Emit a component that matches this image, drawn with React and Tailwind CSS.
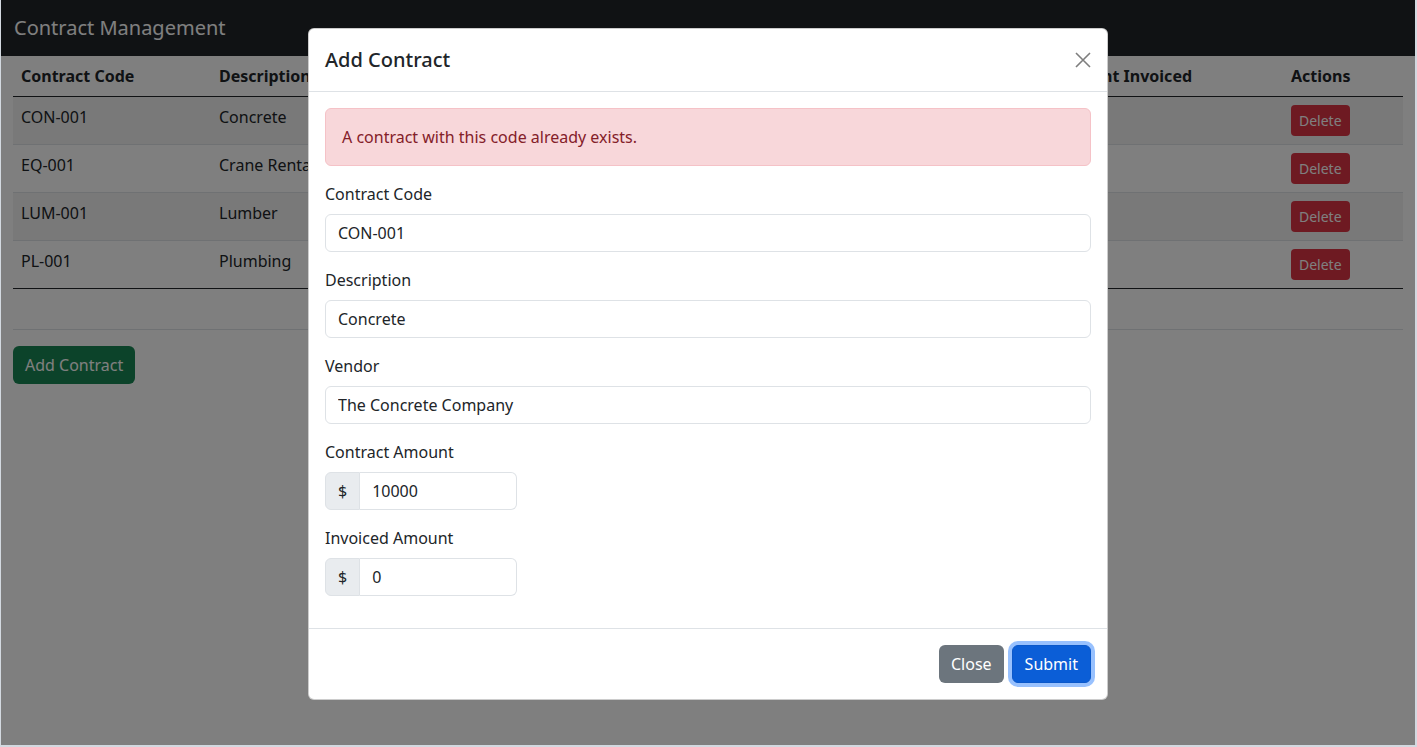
const contracts = [
  { code: "CON-001", description: "Concrete", vendor: "The Concrete Company", amount: "$10,000.00", invoiced: "$0.00" },
  { code: "EQ-001", description: "Crane Rental", vendor: "Heavy Lift Inc.", amount: "$5,000.00", invoiced: "$0.00" },
  { code: "LUM-001", description: "Lumber", vendor: "Timber Supply", amount: "$8,000.00", invoiced: "$0.00" },
  { code: "PL-001", description: "Plumbing", vendor: "Pipe Works", amount: "$4,000.00", invoiced: "$0.00" },
]

const Field = ({ label, value }) => {
  return (
    <div className="mb-4">
      <label className="block mb-2 leading-6">{label}</label>
      <input
        className="block w-full h-[38px] px-3 border border-[#dee2e6] rounded-md text-[#212529] bg-white outline-none"
        defaultValue={value}
      />
    </div>
  )
}

const MoneyField = ({ label, value }) => {
  return (
    <div className="mb-4">
      <label className="block mb-2 leading-6">{label}</label>
      <div className="flex w-1/4 h-[38px]">
        <span className="flex items-center px-3 bg-[#e9ecef] border border-[#dee2e6] rounded-l-md">$</span>
        <input
          className="min-w-0 flex-1 px-3 border border-l-0 border-[#dee2e6] rounded-r-md text-[#212529] bg-white outline-none"
          defaultValue={value}
        />
      </div>
    </div>
  )
}

const App = () => {
  return (
    <div className="w-[1417px] h-[747px] pl-px bg-[#d3d9e0] font-['Noto_Sans',sans-serif] text-[#212529] text-base">
      <div className="relative w-[1414px] h-[745px] overflow-hidden bg-white">
        <nav className="h-14 bg-[#212529] flex items-center px-[13px]">
          <span className="text-white text-xl">Contract Management</span>
        </nav>

        <div className="px-3">
          <table className="w-full mb-4 border-collapse text-left">
            <thead>
              <tr>
                <th className="w-[198px] px-2 py-2 font-bold leading-6">Contract Code</th>
                <th className="w-[283px] px-2 py-2 font-bold leading-6">Description</th>
                <th className="w-[283px] px-2 py-2 font-bold leading-6">Vendor</th>
                <th className="w-[270px] px-2 py-2 font-bold leading-6">Contract Amount</th>
                <th className="w-[236px] px-2 py-2 font-bold leading-6">Amount Invoiced</th>
                <th className="px-2 py-2 font-bold leading-6">Actions</th>
              </tr>
            </thead>
            <tbody className="border-t border-[#212529]">
              {contracts.map((c, i) => (
                <tr key={c.code} className={`border-b last:border-b-0 border-[#dee2e6] ${i % 2 === 0 ? "bg-[#f2f2f2]" : "bg-white"}`}>
                  <td className="px-2 py-2 align-top leading-6">{c.code}</td>
                  <td className="px-2 py-2 align-top leading-6">{c.description}</td>
                  <td className="px-2 py-2 align-top leading-6">{c.vendor}</td>
                  <td className="px-2 py-2 align-top leading-6">{c.amount}</td>
                  <td className="px-2 py-2 align-top leading-6">{c.invoiced}</td>
                  <td className="px-2 py-2 align-top leading-6">
                    <button className="h-[31px] px-2 text-sm text-white bg-[#dc3545] rounded">Delete</button>
                  </td>
                </tr>
              ))}
            </tbody>
            <tfoot className="border-t border-[#212529]">
              <tr className="border-b border-[#dee2e6]">
                <td className="px-2 py-2 leading-6"></td>
                <td className="px-2 py-2 leading-6"></td>
                <td className="px-2 py-2 leading-6"></td>
                <td className="px-2 py-2 leading-6">$27,000.00</td>
                <td className="px-2 py-2 leading-6">$0.00</td>
                <td className="px-2 py-2 leading-6"></td>
              </tr>
            </tfoot>
          </table>
          <button className="h-[38px] px-3 text-white bg-[#198754] rounded-md">Add Contract</button>
        </div>

        <div className="absolute inset-0 bg-black/50 flex justify-center items-start pt-7">
          <div className="w-[800px] bg-white border border-black/20 rounded-md">
            <div className="flex items-center justify-between px-4 py-[15px] border-b border-[#dee2e6]">
              <h5 className="text-xl font-medium leading-[30px]">Add Contract</h5>
              <button className="w-8 h-8 flex items-center justify-center opacity-50 -mr-2">
                <svg width="16" height="16" viewBox="0 0 16 16">
                  <path d="M1 1 L15 15 M15 1 L1 15" stroke="#000" strokeWidth="1.6" />
                </svg>
              </button>
            </div>
            <div className="p-4">
              <div className="mb-4 p-4 leading-6 bg-[#f8d7da] border border-[#f5c2c7] text-[#842029] rounded-md">
                A contract with this code already exists.
              </div>
              <Field label="Contract Code" value="CON-001" />
              <Field label="Description" value="Concrete" />
              <Field label="Vendor" value="The Concrete Company" />
              <MoneyField label="Contract Amount" value="10000" />
              <MoneyField label="Invoiced Amount" value="0" />
            </div>
            <div className="flex justify-end p-3 border-t border-[#dee2e6]">
              <button className="m-1 h-[38px] px-3 text-white bg-[#6c757d] rounded-md">Close</button>
              <button className="m-1 h-[38px] px-3 text-white bg-[#0b5ed7] border border-[#0a58ca] rounded-md shadow-[0_0_0_4px_rgba(49,132,253,0.5)]">Submit</button>
            </div>
          </div>
        </div>
      </div>
    </div>
  )
}

export default App
